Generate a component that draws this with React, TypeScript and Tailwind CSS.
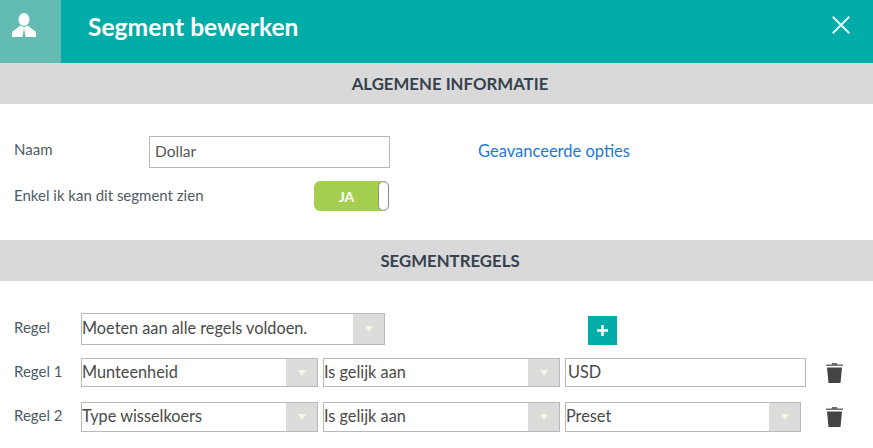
import { ReactNode } from 'react'

const font = "[font-family:Lato,'Liberation_Sans',sans-serif]"

function SectionHeader({ children }: { children: ReactNode }) {
  return (
    <div className="flex h-[41px] items-center justify-center bg-[#d9d9d9] pl-[27px] text-[16.800px] font-bold text-[#36424f]">
      {children}
    </div>
  )
}

function Select({ value, className }: { value: string; className: string }) {
  return (
    <div className={`flex items-stretch border border-[#b9b9b9] bg-white ${className}`}>
      <span className="flex flex-1 items-center pb-[1px] text-[16.300px] text-[#4a4a4a]">{value}</span>
      <span className="flex w-[31px] items-center justify-center bg-[#dcdcda]">
        <svg width="8" height="6" viewBox="0 0 8 6">
          <path d="M0 0h8L4 6z" fill="#f5f5e8" />
        </svg>
      </span>
    </div>
  )
}

function Trash() {
  return (
    <svg width="17" height="20" viewBox="0 0 17 20" className="ml-[20px]">
      <path d="M5.500 1.500 6 0h5l.5 1.500H17V3H0V1.500z" fill="#6e6e6e" />
      <path d="M1 4.500h15L14.500 20h-12z" fill="#444" />
    </svg>
  )
}

function RuleLabel({ children }: { children: ReactNode }) {
  return <span className="w-[81px] pb-[3px] pl-[14px] text-[15px] text-[#4f5b66]">{children}</span>
}

export default function App() {
  return (
    <div className={`h-[448px] w-[873px] overflow-hidden bg-white ${font}`}>
      <header className="flex h-[63px] items-start bg-[#00aca8]">
        <div className="h-full w-[61px] bg-[#63bcb3] pl-[12px] pt-[13px]">
          <svg width="24" height="24" viewBox="0 0 24 24">
            <ellipse cx="12" cy="6.500" rx="5.500" ry="6.500" fill="#fff" />
            <path d="M8.500 12.500 0 19v5h10.500L12 15l1.500 9H24v-5l-8.500-6.500L12 14.500z" fill="#fff" />
          </svg>
        </div>
        <h1 className="ml-[27px] mt-[9px] flex-1 text-[24.600px] font-bold text-white">Segment bewerken</h1>
        <svg width="18" height="18" viewBox="0 0 18 18" className="mr-[23px] mt-[16px]">
          <path d="M.7.7l16.600 16.600M17.300.7.7 17.300" stroke="#e4f6f5" strokeWidth="2" />
        </svg>
      </header>

      <SectionHeader>ALGEMENE INFORMATIE</SectionHeader>

      <section className="h-[136px] pt-[32px]">
        <div className="flex h-[32px] items-center">
          <span className="w-[149px] pb-[6px] pl-[14px] text-[15px] text-[#4f5b66]">Naam</span>
          <div className="flex h-[32px] w-[241px] items-center border border-[#b9b9b9] pl-[5px] text-[15.500px] text-[#555]">
            Dollar
          </div>
          <a className="ml-[88px] pb-[2px] text-[16.500px] text-[#1e78d8]">Geavanceerde opties</a>
        </div>
        <div className="mt-[13px] flex h-[30px] items-center">
          <span className="w-[314px] pb-[2px] pl-[14px] text-[15px] text-[#4f5b66]">Enkel ik kan dit segment zien</span>
          <div className="flex h-[30px] w-[75px] items-center rounded-[6px] bg-[#a5cf4f]">
            <span className="flex-1 pl-[1px] text-center text-[14px] font-bold text-white">JA</span>
            <span className="h-[30px] w-[11px] rounded-[6px] border border-[#8a8a8a] bg-white" />
          </div>
        </div>
      </section>

      <SectionHeader>SEGMENTREGELS</SectionHeader>

      <section className="pt-[32px]">
        <div className="flex h-[32px] items-center">
          <RuleLabel>Regel</RuleLabel>
          <Select value="Moeten aan alle regels voldoen." className="h-[32px] w-[304px]" />
          <button className="ml-[203px] mt-[3px] flex h-[29px] w-[29px] items-center justify-center bg-[#00aca8]">
            <svg width="11" height="11" viewBox="0 0 11 11">
              <path d="M5.500 0v11M0 5.500h11" stroke="#fff" strokeWidth="2.500" />
            </svg>
          </button>
        </div>
        <div className="mt-[13px] flex h-[29px] items-center">
          <RuleLabel>Regel 1</RuleLabel>
          <Select value="Munteenheid" className="h-[29px] w-[237px]" />
          <Select value="Is gelijk aan" className="ml-[5px] h-[29px] w-[237px]" />
          <div className="ml-[5px] flex h-[29px] w-[241px] items-center border border-[#b9b9b9] pb-[1px] pl-[2px] text-[16.300px] text-[#4a4a4a]">
            USD
          </div>
          <Trash />
        </div>
        <div className="mt-[15px] flex h-[30px] items-center">
          <RuleLabel>Regel 2</RuleLabel>
          <Select value="Type wisselkoers" className="h-[30px] w-[237px]" />
          <Select value="Is gelijk aan" className="ml-[5px] h-[30px] w-[237px]" />
          <Select value="Preset" className="ml-[5px] h-[30px] w-[236px]" />
          <span className="ml-[5px]">
            <Trash />
          </span>
        </div>
      </section>
    </div>
  )
}
